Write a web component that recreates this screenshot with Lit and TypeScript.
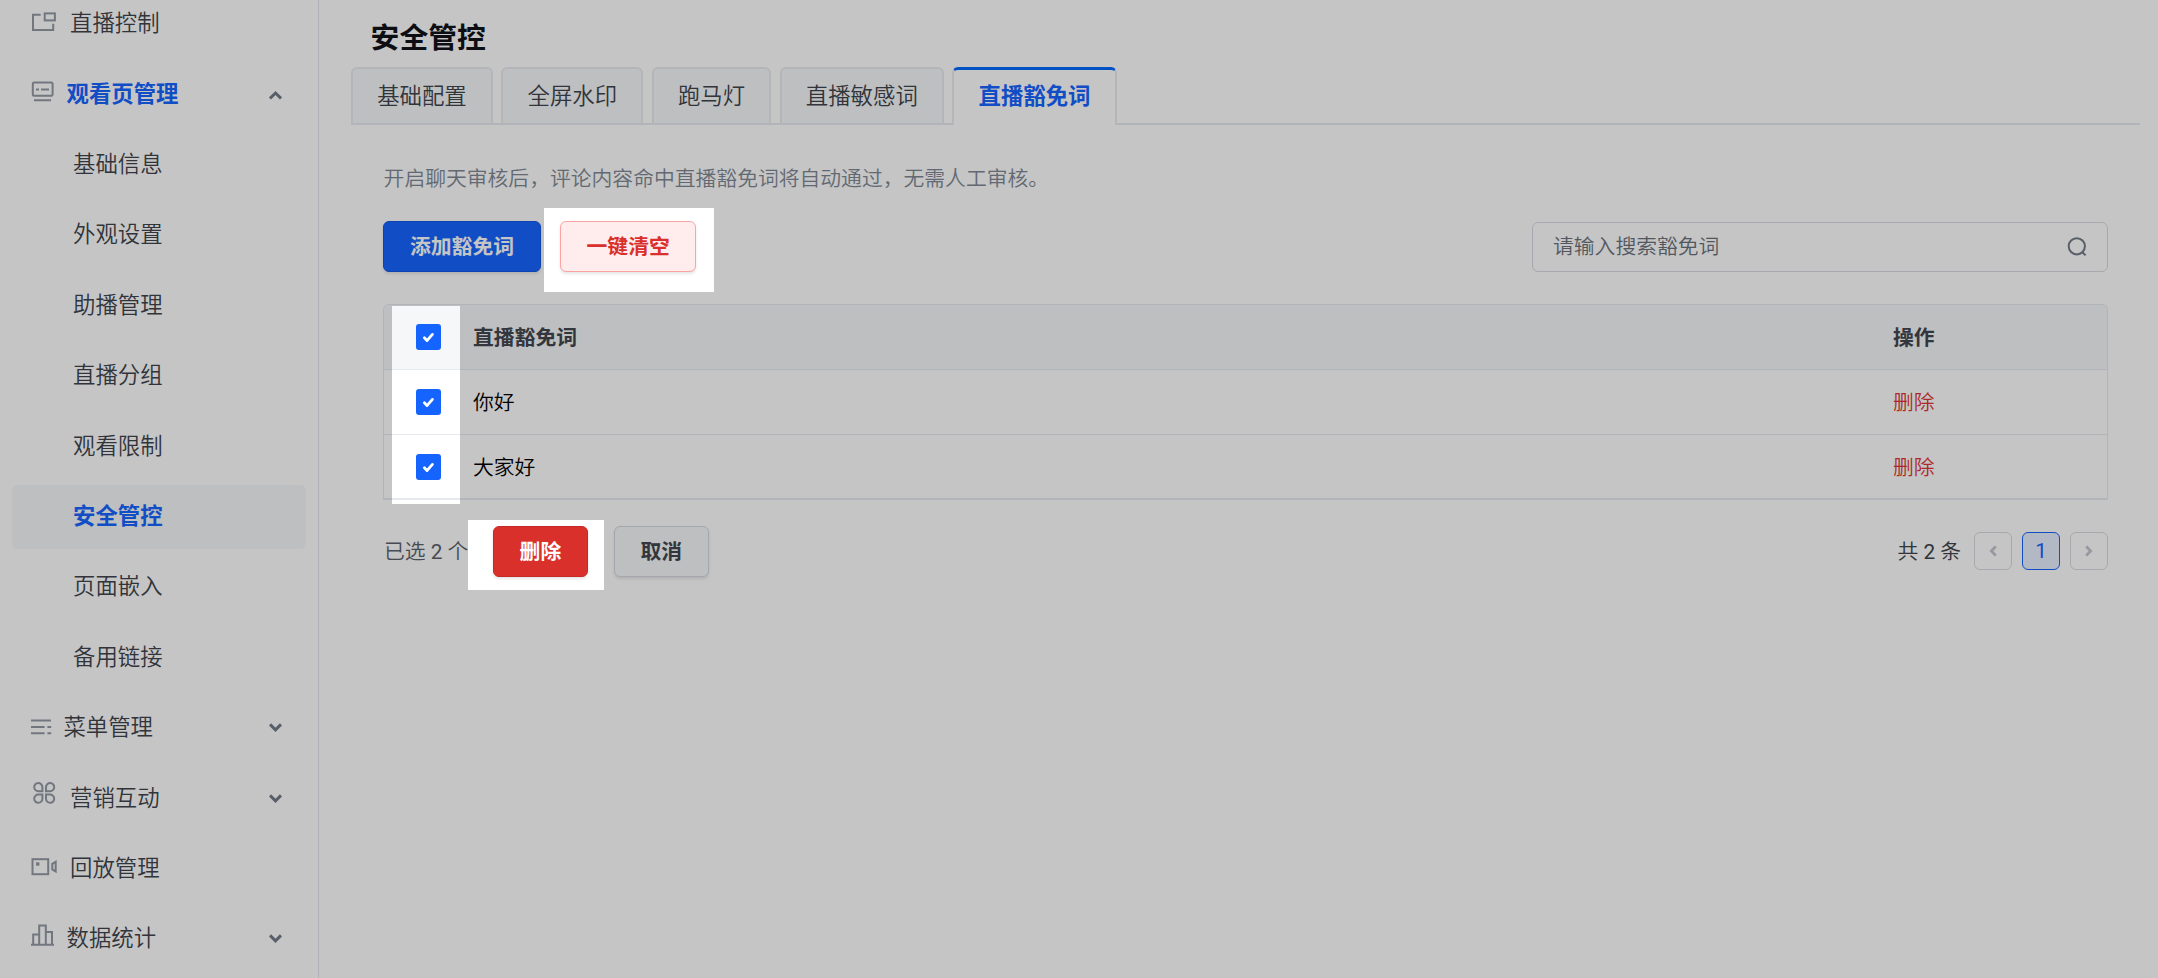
import { LitElement, html, css, svg } from "lit";
import { customElement, property } from "lit/decorators.js";
import { classMap } from "lit/directives/class-map.js";

const icons: Record<string, unknown> = {
  control: svg`<rect x="13.7" y="21.4" width="10.2" height="7" /><path d="M9.7 22.8H2v15.1h20.2V31.8" />`,
  page: svg`<rect x="1.8" y="19.6" width="19.8" height="13.2" rx="1.5" /><path d="M3 37.3h17M5 26.4h3M10 26.4h8" />`,
  menu: svg`<path d="M0 24.6h20M0 31h13.6M16.4 31h3.8M0 37.2h13.6M16.4 37.2h3.8" />`,
  promo: svg`<path d="M11.4 24.2H7.5A4.1 4.1 0 1 1 11.4 20.1ZM15 24.2H18.9A4.1 4.1 0 1 0 15 20.1ZM11.4 27.6H7.5A4.1 4.1 0 1 0 11.4 31.7ZM15 27.6H18.9A4.1 4.1 0 1 1 15 31.7Z" />`,
  replay: svg`<rect x="1.5" y="22.2" width="15.7" height="15" /><path d="M5 27h3.4" stroke-width="3.4" /><path d="M24.7 24.8v9.6l-3.4-2v-5.6z" />`,
  stats: svg`<path d="M0 37.8h23M2.2 37.8V27.4h6M8.2 37.8V18.4h6.6V37.8M14.8 25h6.2V37.8" />`,
};

interface NavEntry {
  label: string;
  icon?: string;
  width?: number;
  arrow?: "up" | "down";
  active?: boolean;
}

const nav: NavEntry[] = [
  { label: "直播控制", icon: "control", width: 39 },
  { label: "观看页管理", icon: "page", width: 35.5, arrow: "up", active: true },
  { label: "基础信息" },
  { label: "外观设置" },
  { label: "助播管理" },
  { label: "直播分组" },
  { label: "观看限制" },
  { label: "安全管控", active: true },
  { label: "页面嵌入" },
  { label: "备用链接" },
  { label: "菜单管理", icon: "menu", width: 32.4, arrow: "down" },
  { label: "营销互动", icon: "promo", width: 39, arrow: "down" },
  { label: "回放管理", icon: "replay", width: 39 },
  { label: "数据统计", icon: "stats", width: 35.5, arrow: "down" },
];

@customElement("side-nav")
export class SideNav extends LitElement {
  static styles = css`
    :host {
      display: block;
      flex: none;
      box-sizing: border-box;
      width: 319px;
      height: 978px;
      overflow: hidden;
      border-right: 1px solid #e3e4ee;
    }
    .list {
      display: flex;
      flex-direction: column;
      gap: 6.4px;
      margin: -7.8px 12px 0;
    }
    .item {
      display: flex;
      align-items: center;
      flex: none;
      box-sizing: border-box;
      height: 64px;
      padding: 0 24.4px 0 19px;
      border-radius: 6px;
      font-size: 22.4px;
      line-height: 32px;
      color: #40444c;
    }
    .sub {
      padding-left: 61px;
    }
    .on {
      color: #1664ff;
      font-weight: 700;
    }
    .sub.on {
      background: #f5f7f9;
    }
    .text {
      flex: 1;
      padding-bottom: 2px;
    }
    .icon {
      flex: none;
      fill: none;
      stroke: #949ba5;
      stroke-width: 2;
    }
    .arrow {
      flex: none;
      fill: none;
      stroke: #737b89;
      stroke-width: 3;
    }
  `;
  render() {
    return html`<nav class="list">
      ${nav.map(
        (n) => html`<div class=${classMap({ item: true, sub: !n.icon, on: !!n.active })}>
          ${n.icon
            ? html`<svg class="icon" width=${n.width!} height="64">${icons[n.icon]}</svg>`
            : ""}
          <span class="text">${n.label}</span>
          ${n.arrow
            ? html`<svg class="arrow" width="13" height="10" viewBox="0 0 13 10">
                <path d=${n.arrow === "up" ? "M1 8.4l5.5-5.4L12 8.4" : "M1 1.4l5.5 5.4L12 1.4"} />
              </svg>`
            : ""}
        </div>`
      )}
    </nav>`;
  }
}

@customElement("check-box")
export class CheckBox extends LitElement {
  static styles = css`
    :host {
      display: block;
      width: 25px;
      height: 26px;
      border-radius: 3px;
      background: #1664ff;
    }
    .tick {
      display: block;
      fill: none;
      stroke: #fff;
      stroke-width: 2.8;
      stroke-linecap: round;
      stroke-linejoin: round;
    }
  `;
  render() {
    return html`<svg class="tick" width="25" height="26"><path d="M8.4 13.8l2.6 2.8 5.4-6.2" /></svg>`;
  }
}

@customElement("ui-button")
export class UiButton extends LitElement {
  @property({ reflect: true }) kind = "plain";
  static styles = css`
    :host {
      display: block;
      flex: none;
      box-sizing: border-box;
      height: 51px;
      padding: 0 25.6px;
      border: 1px solid #d6d9e2;
      border-radius: 6px;
      background: #f5f7f9;
      box-shadow: 0 2px 3px rgba(0, 0, 0, 0.1);
      font-size: 20.8px;
      font-weight: 700;
      line-height: 50px;
      color: #42464e;
    }
    :host([kind="primary"]) {
      padding: 0 26px;
      background: #1664ff;
      border-color: #1259e6;
      color: #fff;
    }
    :host([kind="soft"]) {
      background: #ffecec;
      border-color: #fba4a4;
      color: #d9302b;
    }
    :host([kind="danger"]) {
      background: #d9302b;
      border-color: #c42a26;
      color: #fff;
    }
  `;
  render() {
    return html`<slot></slot>`;
  }
}

@customElement("app-root")
export class AppRoot extends LitElement {
  static styles = css`
    :host {
      display: flex;
      position: relative;
      width: 2158px;
      height: 978px;
      overflow: hidden;
      background: #fff;
      font-family: Roboto, "Noto Sans CJK SC", sans-serif;
      font-weight: 350;
    }
    .main {
      flex: 1;
      min-width: 0;
      padding: 0 18px 0 32px;
    }
    .title {
      margin: 0;
      padding: 16px 0 0 19.6px;
      height: 51px;
      font-size: 28.8px;
      font-weight: 700;
      line-height: 45px;
      color: #10131a;
    }
    .tabs {
      display: flex;
      gap: 8.6px;
      height: 58px;
      box-shadow: inset 0 -2px #e6eaef;
    }
    .tab {
      box-sizing: border-box;
      height: 58px;
      padding: 0 24px 0 24.2px;
      border: 2px solid #e9ebf0;
      border-bottom-color: #e6eaef;
      border-radius: 6px 6px 0 0;
      background: #f5f7f9;
      font-size: 22.4px;
      line-height: 55px;
      color: #40444c;
    }
    .tab.on {
      border-top: 3px solid #006aff;
      border-bottom: 0;
      background: #fff;
      color: #1664ff;
      font-weight: 700;
      line-height: 53px;
    }
    .body {
      padding: 38px 32px 0 32px;
    }
    .tip {
      height: 58px;
      padding-left: 0.6px;
      font-size: 20.8px;
      line-height: 33px;
      color: #808995;
    }
    .bar {
      display: flex;
      align-items: center;
      gap: 19px;
      height: 51px;
    }
    .search {
      display: flex;
      align-items: center;
      justify-content: space-between;
      box-sizing: border-box;
      width: 576px;
      height: 50px;
      margin-left: auto;
      padding: 0 20px;
      border: 1px solid #d9dbe3;
      border-radius: 6px;
      font-size: 20.8px;
      line-height: 30px;
      color: #6c737d;
    }
    .lens {
      fill: none;
      stroke: #737b89;
      stroke-width: 2;
    }
    .table {
      box-sizing: border-box;
      height: 196px;
      margin-top: 32px;
      border: 1px solid #e6eaef;
      border-bottom-width: 2px;
      border-radius: 6px 6px 0 0;
      overflow: hidden;
    }
    .row {
      display: grid;
      grid-template-columns: 89px 1fr 214px;
      align-items: center;
      box-sizing: border-box;
      height: 65px;
      border-bottom: 1px solid #e6eaef;
      font-size: 20.8px;
      line-height: 30px;
      color: #000;
    }
    .row span {
      padding-top: 1px;
    }
    .row:last-child {
      height: 64px;
      border-bottom: 0;
    }
    .head {
      background: #f5f7f9;
      font-weight: 700;
      color: #42464e;
    }
    .box {
      margin-left: 32px;
    }
    .row .del {
      color: #e03636;
    }
    .foot {
      display: flex;
      align-items: center;
      height: 51px;
      margin-top: 26px;
      font-size: 20.8px;
      line-height: 30px;
      color: #5c626c;
    }
    .num {
      font-weight: 400;
    }
    .picked {
      width: 110px;
      padding-left: 1px;
      box-sizing: border-box;
      white-space: nowrap;
    }
    .cancel {
      margin-left: 26px;
    }
    .total {
      margin: 0 13px 0 auto;
      color: #40444c;
    }
    .pager {
      display: flex;
      gap: 10px;
      margin-bottom: 1px;
    }
    .pg {
      display: flex;
      align-items: center;
      justify-content: center;
      box-sizing: border-box;
      width: 38px;
      height: 38px;
      border: 1px solid #d9dbe3;
      border-radius: 6px;
      font-weight: 400;
    }
    .pg.on {
      border-color: #1664ff;
      background: #e8efff;
      color: #1664ff;
    }
    .step {
      fill: none;
      stroke: #c3c6ce;
      stroke-width: 2.8;
    }
    .veil {
      position: absolute;
      inset: 0;
      fill: rgba(0, 0, 0, 0.227);
      fill-rule: evenodd;
      pointer-events: none;
    }
  `;
  render() {
    const tabs = ["基础配置", "全屏水印", "跑马灯", "直播敏感词", "直播豁免词"];
    const words = ["你好", "大家好"];
    return html`
      <side-nav></side-nav>
      <main class="main">
        <h1 class="title">安全管控</h1>
        <div class="tabs">
          ${tabs.map((t, i) => html`<div class=${classMap({ tab: true, on: i === 4 })}>${t}</div>`)}
        </div>
        <section class="body">
          <div class="tip">开启聊天审核后，评论内容命中直播豁免词将自动通过，无需人工审核。</div>
          <div class="bar">
            <ui-button kind="primary">添加豁免词</ui-button>
            <ui-button kind="soft">一键清空</ui-button>
            <div class="search">
              <span>请输入搜索豁免词</span>
              <svg class="lens" width="20" height="20">
                <circle cx="9.8" cy="9.3" r="8.1" />
                <path d="M15.4 15.2l3.2 3.2" />
              </svg>
            </div>
          </div>
          <div class="table">
            <div class="row head">
              <check-box class="box"></check-box><span>直播豁免词</span><span>操作</span>
            </div>
            ${words.map(
              (w) => html`<div class="row">
                <check-box class="box"></check-box><span>${w}</span><span class="del">删除</span>
              </div>`
            )}
          </div>
          <div class="foot">
            <span class="picked">已选 <span class="num">${words.length}</span> 个</span>
            <ui-button kind="danger">删除</ui-button>
            <ui-button class="cancel">取消</ui-button>
            <span class="total">共 <span class="num">${words.length}</span> 条</span>
            <div class="pager">
              <span class="pg"><svg class="step" width="8" height="12"><path d="M6.8 1.4L2.4 6l4.4 4.6" /></svg></span>
              <span class="pg on">1</span>
              <span class="pg"><svg class="step" width="8" height="12"><path d="M1.2 1.4L5.6 6l-4.4 4.6" /></svg></span>
            </div>
          </div>
        </section>
      </main>
      <svg class="veil" width="2158" height="978">
        <path d="M0 0H2158V978H0ZM544 208V292H714V208ZM392 306V504H460V306ZM468 520V590H604V520Z" />
      </svg>
    `;
  }
}
